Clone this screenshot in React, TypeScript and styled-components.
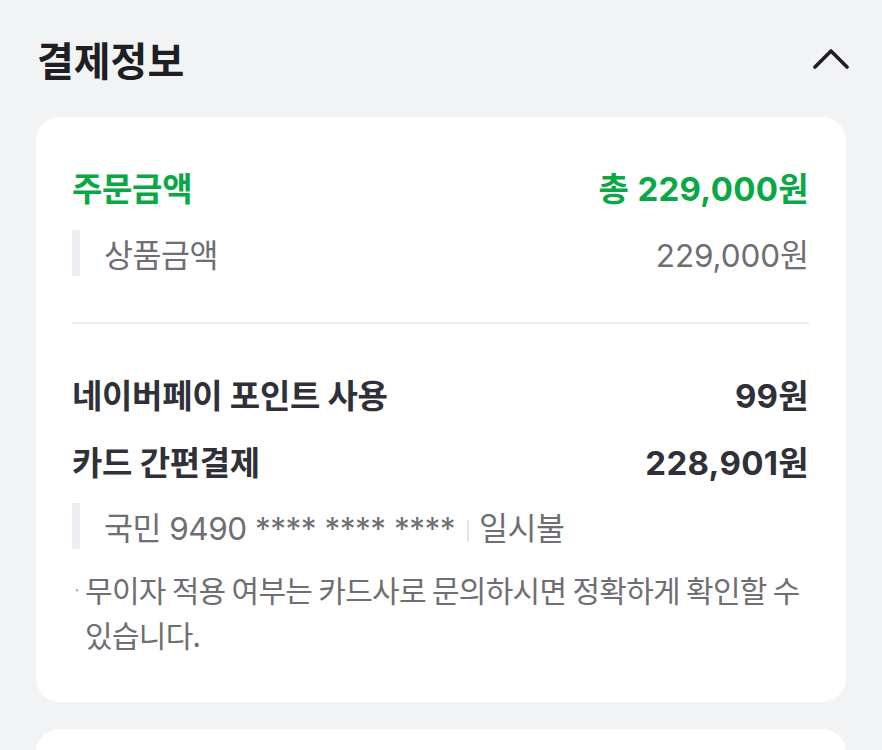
import React from 'react';
import styled, { createGlobalStyle } from 'styled-components';

const GlobalStyle = createGlobalStyle`
  html, body {
    margin: 0;
    padding: 0;
    background: #f2f3f5;
  }
  body {
    font-family: Inter, "Noto Sans CJK KR", "Noto Sans", sans-serif;
    -webkit-font-smoothing: antialiased;
  }
`;

const Page = styled.div`
  padding: 0 36px;
`;

const Header = styled.header`
  display: flex;
  align-items: center;
  justify-content: space-between;
  height: 117px;
  box-sizing: border-box;
`;

const Title = styled.h2`
  margin: 0;
  font-size: 40px;
  font-weight: 700;
  color: #1e1e23;
  letter-spacing: 0;
  padding-left: 1px;
`;

const ToggleButton = styled.button`
  border: 0;
  background: none;
  padding: 0;
  width: 36px;
  height: 36px;
  display: flex;
  align-items: center;
  justify-content: center;
  margin-right: -3px;
  cursor: pointer;
`;

const Card = styled.section`
  background: #fff;
  border-radius: 24px;
  padding: 50px 37px 45px 36px;
  margin-bottom: 27px;
`;

const Row = styled.div<{ $gap?: number }>`
  display: flex;
  justify-content: space-between;
  align-items: center;
  height: 40px;
  margin-top: ${p => p.$gap ?? 0}px;
`;

const Label = styled.span<{ $tone: 'green' | 'dark' }>`
  font-size: 33px;
  font-weight: 700;
  letter-spacing: -0.3px;
  color: ${p => (p.$tone === 'green' ? '#09a845' : '#303038')};
`;

const Amount = styled(Label)`
  letter-spacing: 0.3px;
`;

const SubRow = styled.div<{ $gap: number }>`
  display: flex;
  justify-content: space-between;
  align-items: center;
  height: 46px;
  margin-top: ${p => p.$gap}px;
  border-left: 8px solid #eceef2;
  padding-left: 24px;
  font-size: 31.5px;
  color: #6e6e73;
  letter-spacing: -0.5px;
`;

const SubAmount = styled.span`
  letter-spacing: -0.1px;
`;

const Divider = styled.hr`
  border: 0;
  height: 2px;
  background: #ebecf0;
  margin: 46px 0 50px;
`;

const Sep = styled.span`
  display: inline-block;
  width: 2px;
  height: 22px;
  background: #e3e4e8;
  margin: 0 10px 0 12px;
  vertical-align: -2px;
`;

const Note = styled.div`
  display: flex;
  margin-top: 18px;
  font-family: "Noto Sans CJK KR", "Noto Sans", sans-serif;
  font-size: 30px;
  line-height: 45px;
  color: #6e6e73;
  letter-spacing: -0.7px;
`;

const Bullet = styled.span`
  flex: none;
  width: 13px;
  color: #b0b1b6;
  font-size: 18px;
`;

export default function App() {
  return (
    <Page>
      <GlobalStyle />
      <Header>
        <Title>결제정보</Title>
        <ToggleButton aria-label="접기">
          <svg width="36" height="22" viewBox="0 0 36 22" fill="none">
            <path d="M2 19 L18 3 L34 19" stroke="#1e1e23" strokeWidth="3.6" strokeLinecap="round" strokeLinejoin="round" />
          </svg>
        </ToggleButton>
      </Header>

      <Card>
        <Row>
          <Label $tone="green">주문금액</Label>
          <Amount $tone="green">총 229,000원</Amount>
        </Row>
        <SubRow $gap={23}>
          <span>상품금액</span>
          <SubAmount>229,000원</SubAmount>
        </SubRow>

        <Divider />

        <Row>
          <Label $tone="dark">네이버페이 포인트 사용</Label>
          <Amount $tone="dark">99원</Amount>
        </Row>
        <Row $gap={27}>
          <Label $tone="dark">카드 간편결제</Label>
          <Amount $tone="dark">228,901원</Amount>
        </Row>
        <SubRow $gap={22}>
          <span>
            국민 9490 **** **** ****<Sep />일시불
          </span>
        </SubRow>
        <Note>
          <Bullet>·</Bullet>
          <span>무이자 적용 여부는 카드사로 문의하시면 정확하게 확인할 수 있습니다.</span>
        </Note>
      </Card>

      <Card />
    </Page>
  );
}
